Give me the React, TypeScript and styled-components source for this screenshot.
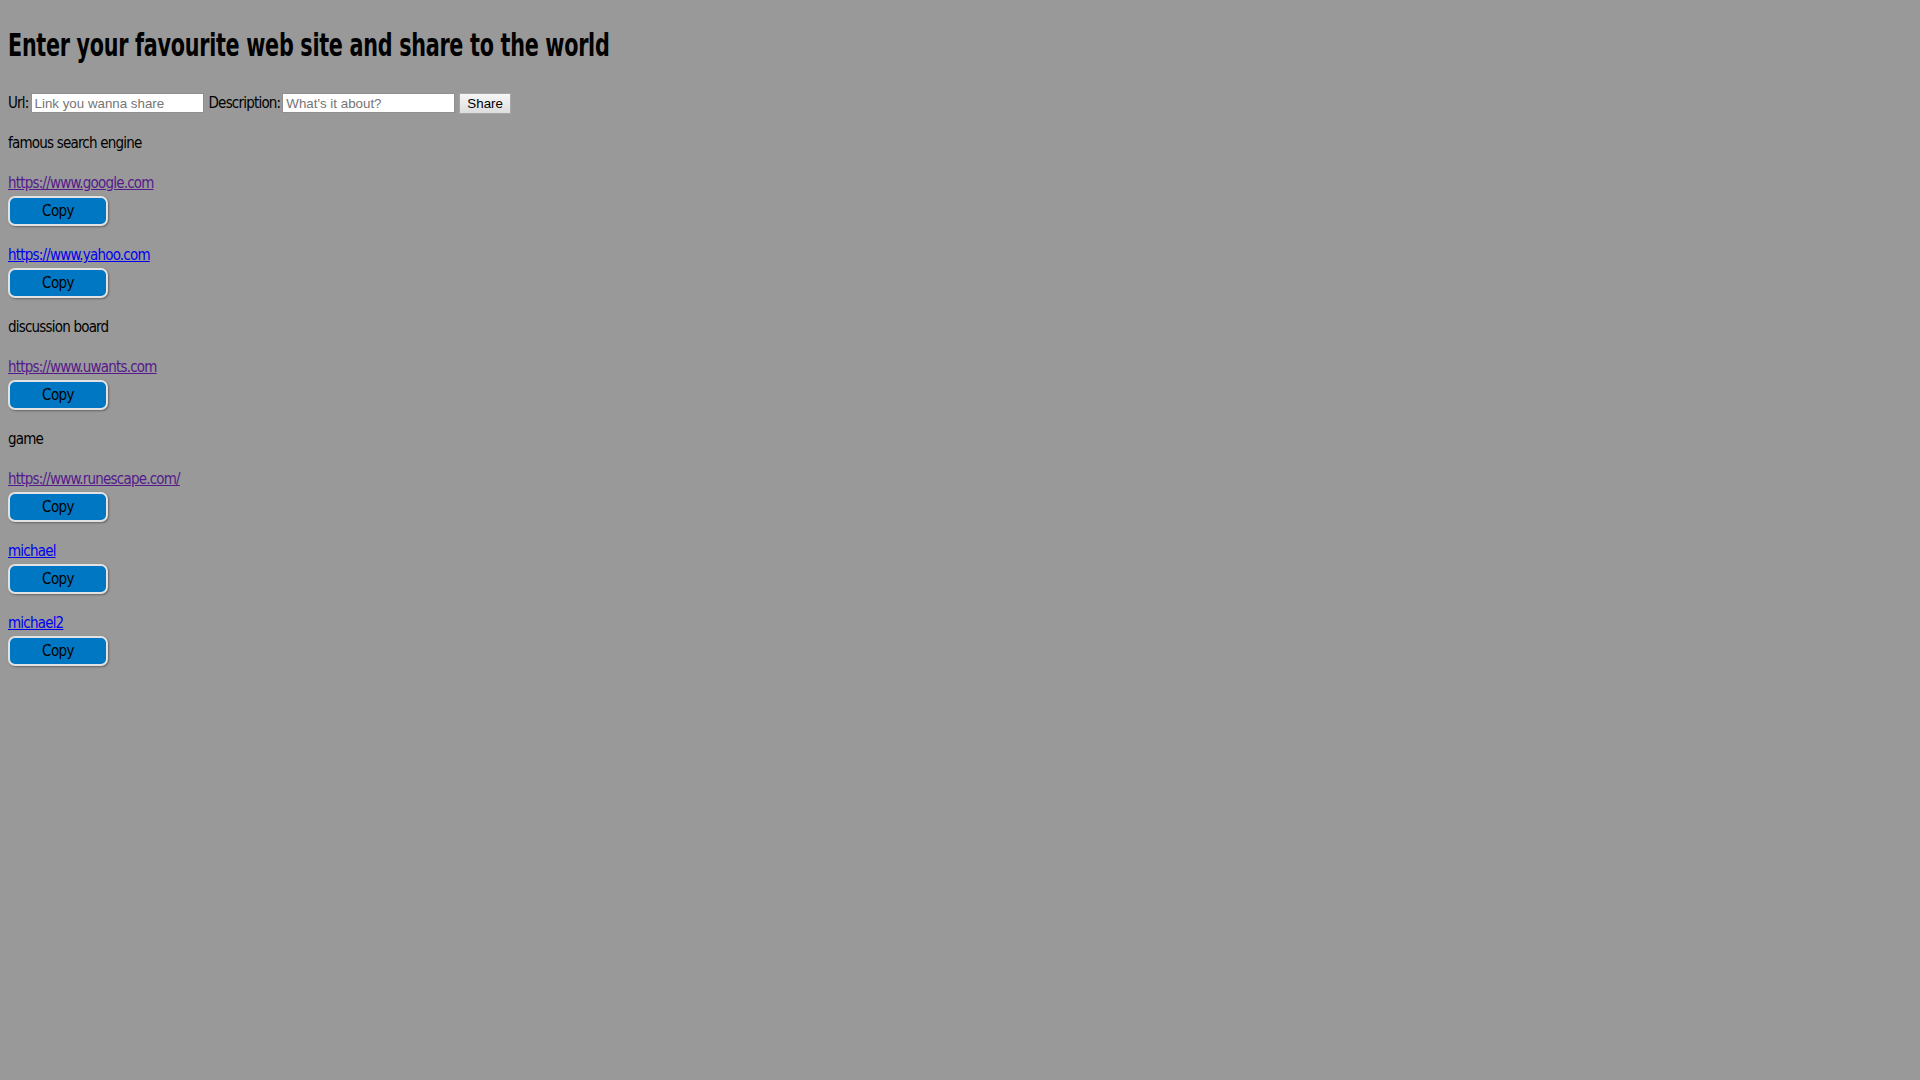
import styled, { createGlobalStyle } from 'styled-components'

const GlobalStyle = createGlobalStyle`
  html, body {
    margin: 0;
    padding: 0;
    background: #999999;
  }
  body {
    padding: 8px;
    font-family: "DejaVu Sans Condensed", "Liberation Sans", sans-serif;
    font-size: 15px;
    letter-spacing: -0.8px;
    color: #000;
  }
`

type Entry = { href: string; label: string; visited?: boolean }
type Group = { description?: string; entries: Entry[] }

const groups: Group[] = [
  {
    description: 'famous search engine',
    entries: [
      { href: 'https://www.google.com', label: 'https://www.google.com', visited: true },
      { href: 'https://www.yahoo.com', label: 'https://www.yahoo.com' },
    ],
  },
  {
    description: 'discussion board',
    entries: [{ href: 'https://www.uwants.com', label: 'https://www.uwants.com', visited: true }],
  },
  {
    description: 'game',
    entries: [
      { href: 'https://www.runescape.com/', label: 'https://www.runescape.com/', visited: true },
      { href: '#michael', label: 'michael' },
      { href: '#michael2', label: 'michael2' },
    ],
  },
]

function App() {
  return (
    <Page>
      <GlobalStyle />
      <Title>Enter your favourite web site and share to the world</Title>
      <ShareForm onSubmit={(e) => e.preventDefault()}>
        <Label htmlFor="url">Url:</Label>
        <TextInput id="url" type="text" placeholder="Link you wanna share" />
        <Label htmlFor="desc">Description:</Label>
        <TextInput id="desc" type="text" placeholder="What's it about?" />
        <ShareButton type="submit">Share</ShareButton>
      </ShareForm>
      <List>
        {groups.map((g, i) => (
          <div key={i}>
            {g.description && <Description>{g.description}</Description>}
            {g.entries.map((e) => (
              <Item key={e.label}>
                <SiteLink href={e.href} visited={e.visited}>
                  {e.label}
                </SiteLink>
                <CopyButton
                  onClick={() => {
                    navigator.clipboard?.writeText(e.href)
                  }}
                >
                  Copy
                </CopyButton>
              </Item>
            ))}
          </div>
        ))}
      </List>
    </Page>
  )
}
export default App

const Page = styled.div`
  display: flex;
  flex-direction: column;
  align-items: flex-start;
`

// condensed look of the original display face
const Title = styled.h1`
  margin: 13px 0 22px;
  font-size: 32px;
  line-height: 48px;
  font-weight: bold;
  letter-spacing: -0.4px;
  white-space: nowrap;
  transform: scaleX(0.72);
  transform-origin: left center;
`

const ShareForm = styled.form`
  display: flex;
  align-items: center;
  height: 24px;
  margin-bottom: 15px;
`

const Label = styled.label`
  line-height: 24px;
  margin-right: 2px;
`

const TextInput = styled.input`
  box-sizing: border-box;
  width: 173px;
  height: 20px;
  margin: 0 5px 0 0;
  padding: 1px 3px;
  border: 1px solid #8f8f8f;
  background: #fff;
  font-family: "Liberation Sans", Arial, sans-serif;
  font-size: 13.33px;
  letter-spacing: 0;
  &::placeholder {
    color: #757575;
  }
`

const ShareButton = styled.button`
  box-sizing: border-box;
  height: 21px;
  margin-left: -1px;
  padding: 0 7px;
  border: 1px solid #a6a6a6;
  background: linear-gradient(#f7f7f7, #dddddd);
  font-family: "Liberation Sans", Arial, sans-serif;
  font-size: 13.33px;
  letter-spacing: 0;
  color: #000;
`

const List = styled.div`
  display: flex;
  flex-direction: column;
`

const Description = styled.p`
  margin: 0 0 16px;
  padding-top: 1px;
  height: 24px;
  box-sizing: border-box;
  line-height: 24px;
`

const Item = styled.div`
  display: flex;
  flex-direction: column;
  align-items: flex-start;
  margin-bottom: 16px;
`

const SiteLink = styled.a<{ visited?: boolean }>`
  line-height: 24px;
  margin-top: 1px;
  margin-bottom: -1px;
  color: ${(p) => (p.visited ? '#551a8b' : '#0000ee')};
  text-decoration: underline;
`

const CopyButton = styled.button`
  box-sizing: border-box;
  width: 100px;
  height: 30px;
  margin-top: 2px;
  padding-top: 1px;
  border: 2px solid #e2e2e2;
  border-radius: 7px;
  background: #0077c2;
  box-shadow: 1px 1px 2px rgba(0, 0, 0, 0.35);
  font-family: "DejaVu Sans Condensed", "Liberation Sans", sans-serif;
  font-size: 15px;
  letter-spacing: -0.6px;
  color: #000;
  cursor: pointer;
`
